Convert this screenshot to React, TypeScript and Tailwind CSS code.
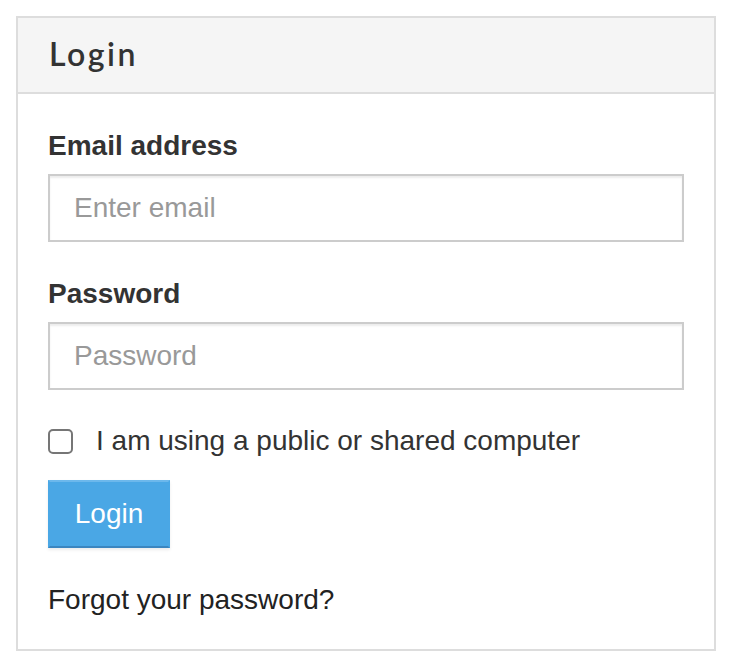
import React from "react";

export default function App() {
  return (
    <div className="p-4 bg-white" style={{ fontFamily: '"Liberation Sans", Arial, sans-serif' }}>
      <div className="w-[700px] border-2 border-[#dddddd] bg-white">
        <div className="h-[76px] flex items-center bg-[#f5f5f5] border-b-2 border-[#dddddd] px-[30px]">
          <h3
            className="text-[32px] leading-[40px] font-semibold text-[#333333] tracking-[2.5px] mt-[-2px] ml-[1px]"
            style={{ fontFamily: 'Lato, "Liberation Sans", sans-serif' }}
          >
            Login
          </h3>
        </div>
        <div className="px-[30px] pt-[32px] pb-[29px]">
          <div className="mb-[32px]">
            <label className="block text-[28px] leading-[40px] font-bold text-[#333333] mb-[8px]">
              Email address
            </label>
            <input
              type="email"
              placeholder="Enter email"
              className="block w-full h-[68px] border-2 border-[#cccccc] pl-[24px] text-[28px] text-[#555555] placeholder:text-[#999999] shadow-[inset_0_2px_2px_rgba(0,0,0,0.075)] outline-none"
            />
          </div>
          <div className="mb-[31px]">
            <label className="block text-[28px] leading-[40px] font-bold text-[#333333] mb-[8px]">
              Password
            </label>
            <input
              type="password"
              placeholder="Password"
              className="block w-full h-[68px] border-2 border-[#cccccc] pl-[24px] text-[28px] text-[#555555] placeholder:text-[#999999] shadow-[inset_0_2px_2px_rgba(0,0,0,0.075)] outline-none"
            />
          </div>
          <label className="flex items-center h-[40px] mb-[19px]">
            <input
              type="checkbox"
              className="appearance-none w-[25px] h-[25px] border-2 border-[#767676] rounded-[5px] bg-white shrink-0"
            />
            <span className="ml-[23px] text-[28px] leading-[40px] text-[#333333]">
              I am using a public or shared computer
            </span>
          </label>
          <button
            type="button"
            className="w-[122px] h-[68px] bg-[#4aa7e5] border-2 border-[#4aa7e5] border-t-[#6cb8ec] border-b-[#3b86c0] text-white text-[28px] leading-[40px] shadow-[0_2px_3px_rgba(0,0,0,0.08)]"
          >
            Login
          </button>
          <p className="mt-[32px] text-[28px] leading-[40px] text-[#222222]">Forgot your password?</p>
        </div>
      </div>
    </div>
  );
}
